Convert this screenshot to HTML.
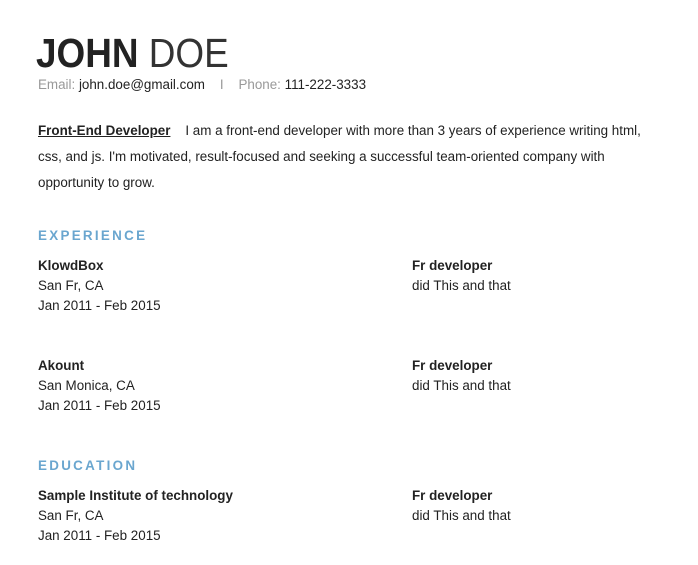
<!DOCTYPE html>
<html><head><style>
body{margin:0;background:#fff;font-family:"Liberation Sans",sans-serif;color:#222;}
.a{position:absolute;white-space:nowrap;font-size:13.4px;line-height:20px;}
h1{position:absolute;left:36px;top:31px;margin:0;font-size:41px;line-height:44px;font-weight:700;color:#222;transform:scaleX(0.9);transform-origin:left top;white-space:nowrap}
h1 span{font-weight:normal;color:#333}
.g{color:#999}
.h{position:absolute;left:38px;font-size:13.4px;font-weight:700;color:#6aa6cf;letter-spacing:2.3px}
b{font-weight:700}
</style></head><body>
<h1>JOHN <span>DOE</span></h1>
<div class="a" style="left:38px;top:75px"><span class="g">Email:</span> john.doe@gmail.com &nbsp;&nbsp; <span class="g">I</span> &nbsp;&nbsp; <span class="g">Phone:</span> 111-222-3333</div>
<div class="a" style="left:38px;top:118px;line-height:26px"><b style="text-decoration:underline">Front-End Developer</b> &nbsp;&nbsp; I am a front-end developer with more than 3 years of experience writing html,<br>css, and js. I'm motivated, result-focused and seeking a successful team-oriented company with<br>opportunity to grow.</div>
<div class="h" style="top:228px">EXPERIENCE</div>
<div class="a" style="left:38px;top:256px"><b>KlowdBox</b><br>San Fr, CA<br>Jan 2011 - Feb 2015</div>
<div class="a" style="left:412px;top:256px"><b>Fr developer</b><br>did This and that</div>
<div class="a" style="left:38px;top:356px"><b>Akount</b><br>San Monica, CA<br>Jan 2011 - Feb 2015</div>
<div class="a" style="left:412px;top:356px"><b>Fr developer</b><br>did This and that</div>
<div class="h" style="top:458px">EDUCATION</div>
<div class="a" style="left:38px;top:486px"><b>Sample Institute of technology</b><br>San Fr, CA<br>Jan 2011 - Feb 2015</div>
<div class="a" style="left:412px;top:486px"><b>Fr developer</b><br>did This and that</div>
</body></html>
